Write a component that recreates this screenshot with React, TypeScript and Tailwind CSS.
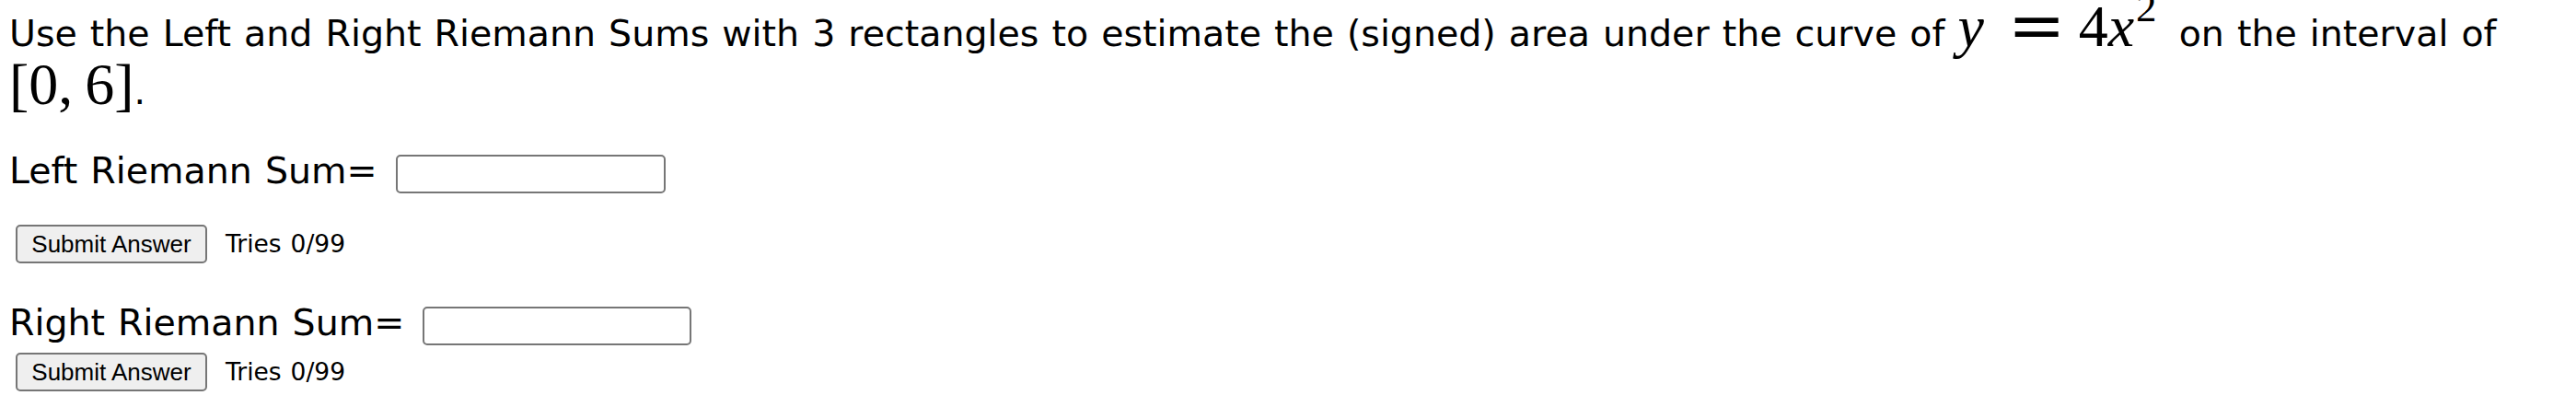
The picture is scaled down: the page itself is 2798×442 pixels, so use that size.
interface AnswerRowTypes {
  label: string;
  inputWidth: string;
}

function SubmitRow() {
  return (
    <div className="flex items-start">
      <button
        type="button"
        className="ml-[7px] box-border h-[42px] w-[208px] rounded-[5px] border-2 border-[#767676] bg-[#efefef] text-center font-['Liberation_Sans',Arial,sans-serif] text-[26px] leading-none text-black [word-spacing:0px]"
      >
        Submit Answer
      </button>
      <span className="ml-[20px] text-[26.5px] leading-[42px]">Tries 0/99</span>
    </div>
  );
}

function AnswerRow({ label, inputWidth }: AnswerRowTypes) {
  return (
    <div className="flex items-start">
      <span className="whitespace-pre leading-[35px]">{label} </span>
      <input
        type="text"
        aria-label={label}
        className={`ml-[6px] box-border h-[42px] rounded-[5px] border-2 border-[#767676] bg-white ${inputWidth}`}
      />
    </div>
  );
}

function MathInline() {
  return (
    <span className="mr-[10px] whitespace-nowrap [word-spacing:0px]">
      <span className="font-['Liberation_Serif',serif] text-[64px] italic leading-[44px]">y</span>
      <span className="relative top-[3px] ml-[26px] mr-[14px] font-['DejaVu_Serif',serif] text-[75px] leading-[34px]">=</span>
      <span className="font-['Liberation_Serif',serif] text-[64px] leading-[44px]">4</span>
      <span className="font-['Liberation_Serif',serif] text-[64px] italic leading-[44px]">x</span>
      <span className="relative -top-[27px] ml-[2px] font-['Liberation_Serif',serif] text-[45px] leading-[30px]">2</span>
    </span>
  );
}

export default function App() {
  return (
    <div className="min-h-[442px] bg-white pl-[10px] font-['DejaVu_Sans',Verdana,sans-serif] text-[39.5px] text-black [word-spacing:1.5px]">
      <p className="whitespace-nowrap pt-[5px] leading-[63px]">
        Use the Left and Right Riemann Sums with 3 rectangles to estimate the (signed) area under the curve of{" "}
        <MathInline /> on the interval of
        <br />
        <span className="font-['Liberation_Serif',serif] text-[64px] leading-[44px] [word-spacing:0px]">[0,&thinsp;6]</span>.
      </p>
      <div className="mt-[37px]">
        <AnswerRow label="Left Riemann Sum=" inputWidth="w-[293px]" />
      </div>
      <div className="mt-[34px]">
        <SubmitRow />
      </div>
      <div className="mt-[47px]">
        <AnswerRow label="Right Riemann Sum=" inputWidth="w-[292px]" />
      </div>
      <div className="mt-[8px]">
        <SubmitRow />
      </div>
    </div>
  );
}
